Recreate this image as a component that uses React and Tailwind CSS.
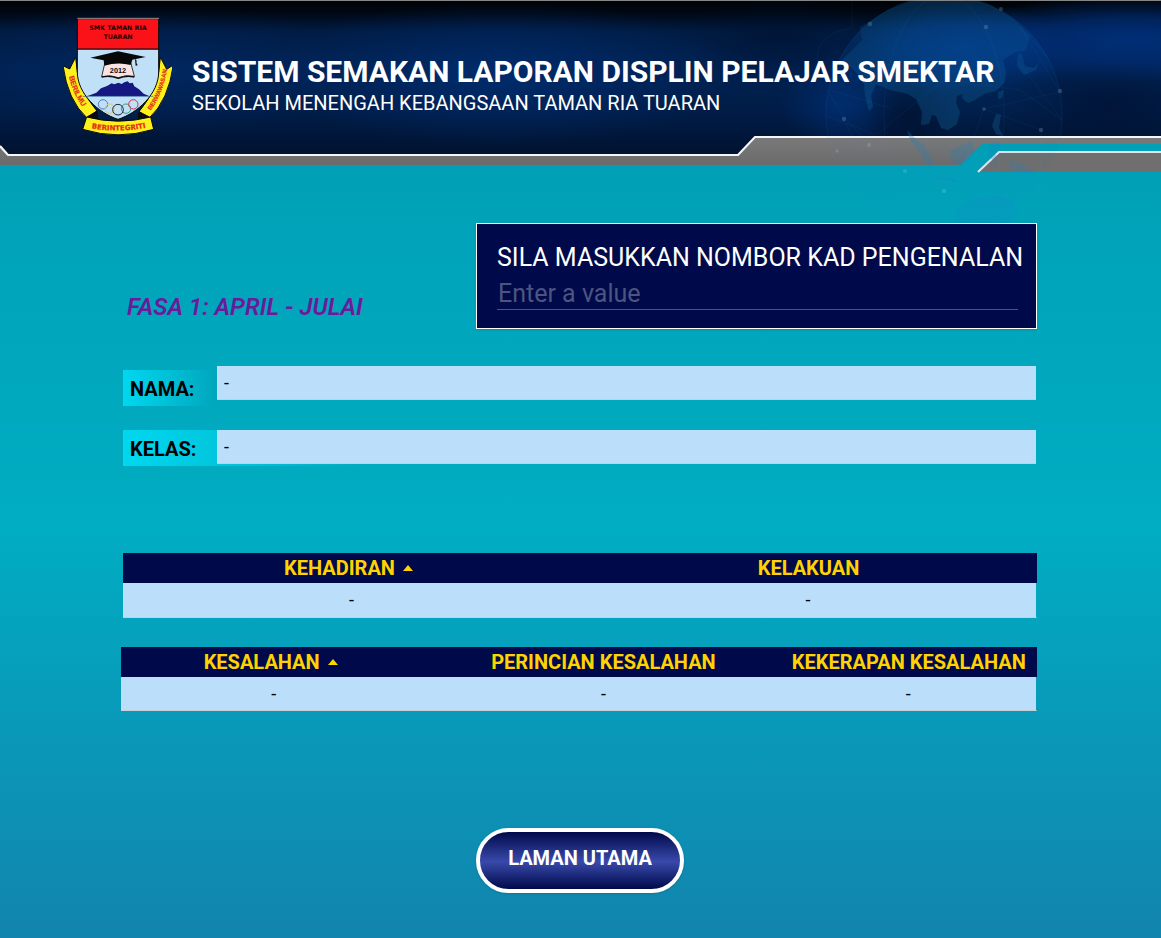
import React from "react";

function HeaderArt() {
  return (
    <svg
      className="pointer-events-none absolute left-0 top-0 h-[235px] w-full"
      viewBox="0 0 1161 235"
      preserveAspectRatio="none"
      aria-hidden="true"
    >
      <defs>
        <linearGradient id="sky" x1="0" y1="0" x2="0" y2="1">
          <stop offset="0" stopColor="#000205" />
          <stop offset="0.08" stopColor="#000814" />
          <stop offset="0.2" stopColor="#001b42" />
          <stop offset="0.45" stopColor="#002150" />
          <stop offset="0.7" stopColor="#001d48" />
          <stop offset="1" stopColor="#00122f" />
        </linearGradient>
        <linearGradient id="steel" x1="0" y1="0" x2="0" y2="1">
          <stop offset="0" stopColor="#7a7a7a" />
          <stop offset="1" stopColor="#6c6b6b" />
        </linearGradient>
        <radialGradient id="glowLeft">
          <stop offset="0" stopColor="#003078" stopOpacity="0.7" />
          <stop offset="1" stopColor="#003078" stopOpacity="0" />
        </radialGradient>
        <radialGradient id="glowRight">
          <stop offset="0" stopColor="#00307c" stopOpacity="0.9" />
          <stop offset="0.5" stopColor="#00307c" stopOpacity="0.6" />
          <stop offset="1" stopColor="#00307c" stopOpacity="0" />
        </radialGradient>
        <radialGradient id="shade">
          <stop offset="0" stopColor="#000f2c" stopOpacity="0.8" />
          <stop offset="1" stopColor="#000f2c" stopOpacity="0" />
        </radialGradient>
        <linearGradient id="ocean" x1="0" y1="0" x2="0" y2="1">
          <stop offset="0" stopColor="#0a4f8c" stopOpacity="0.4" />
          <stop offset="0.3" stopColor="#0058b0" stopOpacity="0.1" />
          <stop offset="0.55" stopColor="#0060b0" stopOpacity="0.02" />
          <stop offset="1" stopColor="#0090e0" stopOpacity="0.04" />
        </linearGradient>
        <linearGradient id="land" gradientUnits="userSpaceOnUse" x1="0" y1="0" x2="0" y2="235">
          <stop offset="0" stopColor="#1070b0" stopOpacity="0.06" />
          <stop offset="0.3" stopColor="#1070b0" stopOpacity="0.24" />
          <stop offset="0.6" stopColor="#1a80b8" stopOpacity="0.26" />
          <stop offset="1" stopColor="#1484d8" stopOpacity="0.14" />
        </linearGradient>
        <clipPath id="skyClip">
          <path d="M0 0H1161V137H755L738 155H8L0 146Z" />
        </clipPath>
      </defs>

      <g clipPath="url(#skyClip)">
        <rect width="1161" height="156" fill="url(#sky)" />
        <ellipse cx="500" cy="74" rx="240" ry="72" fill="url(#glowLeft)" />
        <ellipse cx="150" cy="70" rx="220" ry="66" fill="url(#glowLeft)" opacity="0.6" />
        <ellipse cx="1130" cy="40" rx="190" ry="44" fill="url(#glowRight)" />
        <ellipse cx="960" cy="48" rx="110" ry="46" fill="url(#glowRight)" />
        <ellipse cx="840" cy="104" rx="60" ry="50" fill="url(#glowLeft)" />
        <ellipse cx="780" cy="36" rx="90" ry="50" fill="url(#shade)" opacity="0.6" />
        <ellipse cx="1110" cy="105" rx="110" ry="45" fill="url(#shade)" opacity="0.7" />
        <ellipse cx="910" cy="115" rx="46" ry="40" fill="url(#shade)" />
      </g>

      <path d="M0 146L8 155H738L755 137H1161V144H982L960 165H0Z" fill="url(#steel)" />
      <path d="M0 146L8 155H738L755 137H1161" fill="none" stroke="#f4f6fa" strokeWidth="2.2" />
      <path d="M978 172L999 152H1161V172Z" fill="#706e6e" />
      <path d="M978 172L999 152H1161" fill="none" stroke="#dfe6ec" strokeWidth="2.2" />

      <circle cx="944" cy="115" r="119" fill="url(#ocean)" />
      <g fill="url(#land)">
        <path d="M860 27L888 10L915 1H985L1012 18L1030 36L1026 50L1013 53L1003 60L1006 72L1005 82L996 91L984 94L975 100L968 103L962 98L963 93L968 92L957 96L956 103L960 112L957 124L948 130L941 128L936 116L932 115L929 124L921 125L922 112L916 99L908 94L890 90L876 84L871 96L873 107L869 111L865 96L864 84L856 72L849 66L842 60L852 50L862 40Z" />
        <path d="M1018 53L1017 66L1024 75L1036 70L1039 62L1034 68L1025 66L1022 54Z" />
        <path d="M998 92L1004 90L1002 98L998 99ZM996 114L1001 115L999 128L1003 136L996 134L992 126Z" />
        <path d="M907 130L916 139L924 145L932 158L934 166L926 163L917 149L910 140Z" />
        <path d="M950 150L962 145L972 141L975 150L969 161L960 166L951 160Z" />
        <path d="M988 150L992 142L1002 144L996 153L997 164L990 158Z" />
        <path d="M933 176L952 178L962 182L940 181ZM1008 160L1022 164L1036 174L1022 174L1011 169ZM955 210L975 198L1000 196L1012 200L1018 212L1010 224H960Z" />
      </g>
      <g fill="none" stroke="#4aa6f0" strokeOpacity="0.09" strokeWidth="0.7">
        <path d="M825 115L876 135L944 80L1020 90L1062 120L1010 50M844 120L875 180L950 205L1040 190L1041 130L984 109L944 220M890 108L830 90M984 109L1060 92L1020 27L1048 57" />
        <ellipse cx="944" cy="115" rx="60" ry="119" />
        <ellipse cx="944" cy="115" rx="118" ry="119" />
        <path d="M828 90C860 160 960 205 1045 185M852 0V28C838 30 812 38 818 66" />
      </g>
      <g fill="#a8d0e8" fillOpacity="0.22">
        <circle cx="870" cy="24" r="2.2" />
        <circle cx="1001" cy="9" r="2" />
        <circle cx="986" cy="27" r="2.2" />
        <circle cx="844" cy="119" r="2.2" />
        <circle cx="1060" cy="91" r="2.2" />
        <circle cx="1041" cy="130" r="2.2" />
        <circle cx="984" cy="109" r="1.8" />
        <circle cx="869" cy="145" r="2" />
        <circle cx="837" cy="151" r="1.8" />
        <circle cx="905" cy="171" r="2" />
        <circle cx="944" cy="191" r="2.2" />
      </g>
      <rect width="1161" height="1" fill="#868686" />
    </svg>
  );
}

function Emblem() {
  return (
    <svg
      className="relative h-[119px] w-[108px] shrink-0"
      viewBox="41 50 324 357"
      role="img"
      aria-label="Lencana SMK Taman Ria Tuaran"
    >
      <defs>
        <path id="ribbonLeft" d="M54 220Q66 282 102 326" />
        <path id="ribbonRight" d="M297 334Q337 288 351 203" />
        <path id="ribbonBottom" d="M108 381Q203 401 302 379" />
      </defs>
      <g stroke="#0a0a0a" strokeWidth="3" strokeLinejoin="round">
        <path d="M38 196L58 206L76 170Q78 262 140 332L110 353Q52 300 38 196Z" fill="#fdf01c" />
        <path d="M369 194L349 207L330 170Q328 262 266 334L297 353Q354 300 369 194Z" fill="#fdf01c" />
        <path d="M140 332L110 350L142 358ZM266 334L297 350L264 358Z" fill="#0a0a0a" />
        <path d="M81 146H325V215C325 280 262 338 203 357C144 338 81 280 81 215Z" fill="#bfe0f7" />
        <path d="M81 55H325V146H81Z" fill="#fb1218" />
      </g>
      <path d="M81 54H326" stroke="#f3c9cc" strokeWidth="2" />
      <path
        d="M112 287L138 277L152 264L170 257L184 249L192 252L204 247L214 251L222 246L232 243L238 249L247 247L252 258L266 267L280 280L296 287Z"
        fill="#151880"
      />
      <path d="M97 288H309" stroke="#27508f" strokeWidth="2" />
      <path d="M164 186H241L252 228Q226 222 204 232Q180 222 154 229Z" fill="#fae3e3" stroke="#160c0c" strokeWidth="2.5" />
      <path d="M154 230Q180 225 204 234Q226 225 252 230" fill="none" stroke="#0a0a0a" strokeWidth="4" />
      <path d="M120 172L203 153L286 170L246 178L241 194Q203 184 162 196L160 180Z" fill="#080808" />
      <path d="M254 176Q261 180 258 187L262 195L256 196Z" fill="#080808" />
      <g fill="none" strokeWidth="3">
        <circle cx="158" cy="312" r="14" stroke="#4c7fd0" />
        <circle cx="178" cy="325" r="14" stroke="#e8c66c" />
        <circle cx="227" cy="325" r="14" stroke="#3d9a78" />
        <circle cx="203" cy="328" r="16" stroke="#1b2a3a" />
        <circle cx="249" cy="312" r="14" stroke="#d8304c" />
      </g>
      <path
        d="M109 350Q203 375 301 350L310 387Q203 420 97 387Z"
        fill="#fdf01c"
        stroke="#0a0a0a"
        strokeWidth="3"
        strokeLinejoin="round"
      />
      <g fontFamily="'DejaVu Sans', sans-serif" fontWeight="700" fontSize="19" fill="#1a0505" textAnchor="middle">
        <text x="203" y="90">SMK TAMAN RIA</text>
        <text x="203" y="117">TUARAN</text>
      </g>
      <text x="203" y="217" textAnchor="middle" fontFamily="'Liberation Sans', sans-serif" fontWeight="700" fontSize="22" fill="#0a0a0a">
        2012
      </text>
      <g fontFamily="'Liberation Sans', sans-serif" fontWeight="700" fill="#e8281c" stroke="#e8281c" strokeWidth="0.6" textAnchor="middle">
        <text fontSize="22">
          <textPath href="#ribbonLeft" startOffset="50%">BERILMU</textPath>
        </text>
        <text fontSize="18">
          <textPath href="#ribbonRight" startOffset="50%">BERWAWASAN</textPath>
        </text>
        <text fontSize="21" fontFamily="'DejaVu Sans', sans-serif">
          <textPath href="#ribbonBottom" startOffset="50%">BERINTEGRITI</textPath>
        </text>
      </g>
    </svg>
  );
}

function SortArrow() {
  return (
    <svg className="mb-1 ml-2 mr-[6px] inline-block h-[6px] w-[10px] align-middle" viewBox="0 0 10 6" aria-hidden="true">
      <path d="M0 6L5 0L10 6Z" fill="#ffd200" />
    </svg>
  );
}

function ReportTable({ label, columns, rowClass }) {
  return (
    <table aria-label={label} className="w-full table-fixed border-separate border-spacing-0 text-center">
      <colgroup>
        {columns.map((c) => (
          <col key={c.name} className={c.width} />
        ))}
      </colgroup>
      <thead className="bg-[#000a4a] text-xl font-bold leading-[30px] text-[#ffd200]">
        <tr>
          {columns.map((c, i) => (
            <th key={c.name} scope="col" className="whitespace-nowrap p-0 font-bold">
              {c.name}
              {i === 0 && <SortArrow />}
            </th>
          ))}
        </tr>
      </thead>
      <tbody>
        <tr className={rowClass}>
          {columns.map((c) => (
            <td
              key={c.name}
              className="border-b border-[#c4d0da] bg-[#bbdefb] p-0 text-lg leading-6 last:border-r last:border-r-transparent last:bg-clip-padding"
            >
              -
            </td>
          ))}
        </tr>
      </tbody>
    </table>
  );
}

export default function App() {
  return (
    <div className="min-h-screen bg-[linear-gradient(180deg,#009bb2_0%,#00adc2_56%,#1284ae_100%)] font-[Roboto,sans-serif] text-black">
      <header className="relative">
        <HeaderArt />
        <div className="flex min-h-[172px] items-start gap-5 pl-16 pt-[17px]">
          <Emblem />
          <div className="relative pt-[37px] text-white">
            <h1 className="whitespace-nowrap text-[30px] font-bold leading-9">
              SISTEM SEMAKAN LAPORAN DISPLIN PELAJAR SMEKTAR
            </h1>
            <p className="whitespace-nowrap text-xl leading-[26px]">SEKOLAH MENENGAH KEBANGSAAN TAMAN RIA TUARAN</p>
          </div>
        </div>
      </header>

      <main className="relative pb-[45px] pl-[121px] pr-[124px] pt-[51px]">
        <section className="flex items-end justify-between pl-[6px]">
          <h2 className="pb-2 text-2xl font-semibold italic leading-7 text-[#6a1b9a]">FASA 1: APRIL - JULAI</h2>
          <div className="w-[561px] border border-white bg-[#000a4a] pb-[18px] pl-5 pr-[18px] pt-4 shadow">
            <label htmlFor="ic" className="block whitespace-nowrap text-[25px] leading-9 text-white">
              SILA MASUKKAN NOMBOR KAD PENGENALAN
            </label>
            <input
              id="ic"
              type="text"
              placeholder="Enter a value"
              className="block h-[34px] w-full border-b border-[#4d5480] bg-transparent px-px pt-[2px] text-[25px] text-white outline-none placeholder:text-[#4d5480]"
            />
          </div>
        </section>

        <dl className="mt-[37px] flex flex-col gap-6 pl-[2px] pr-px">
          <div className="flex items-start">
            <dt className="mt-1 h-9 w-[94px] shrink-0 bg-[linear-gradient(90deg,#00d8f0,#00a6bc)] pl-[7px] text-xl font-bold leading-[38px]">
              NAMA:
            </dt>
            <dd className="h-[34px] grow border-b border-[#c4d0da] bg-[#bbdefb] pl-[7px] text-lg leading-[34px]">-</dd>
          </div>
          <div className="flex items-start bg-[linear-gradient(90deg,#00d8f0,transparent_240px)]">
            <dt className="h-9 w-[94px] shrink-0 pl-[7px] text-xl font-bold leading-[38px]">KELAS:</dt>
            <dd className="h-[34px] grow border-b border-[#c4d0da] bg-[#bbdefb] pl-[7px] text-lg leading-[34px]">-</dd>
          </div>
        </dl>

        <div className="mt-[87px] pl-[2px]">
          <ReportTable
            label="Kehadiran dan kelakuan"
            rowClass="h-[35px]"
            columns={[
              { name: "KEHADIRAN", width: "w-1/2" },
              { name: "KELAKUAN", width: "w-1/2" },
            ]}
          />
        </div>
        <div className="mt-[29px]">
          <ReportTable
            label="Kesalahan"
            rowClass="h-[34px]"
            columns={[
              { name: "KESALAHAN", width: "w-1/3" },
              { name: "PERINCIAN KESALAHAN", width: "w-auto" },
              { name: "KEKERAPAN KESALAHAN", width: "w-[28%]" },
            ]}
          />
        </div>

        <div className="mt-[117px] flex justify-center pl-[2px]">
          <button
            type="button"
            className="h-[65px] w-[208px] rounded-full border-4 border-white bg-[linear-gradient(180deg,#000a4a,#3949ab_52%,#000a4a)] pb-[6px] text-xl font-bold text-white shadow"
          >
            LAMAN UTAMA
          </button>
        </div>
      </main>
    </div>
  );
}
